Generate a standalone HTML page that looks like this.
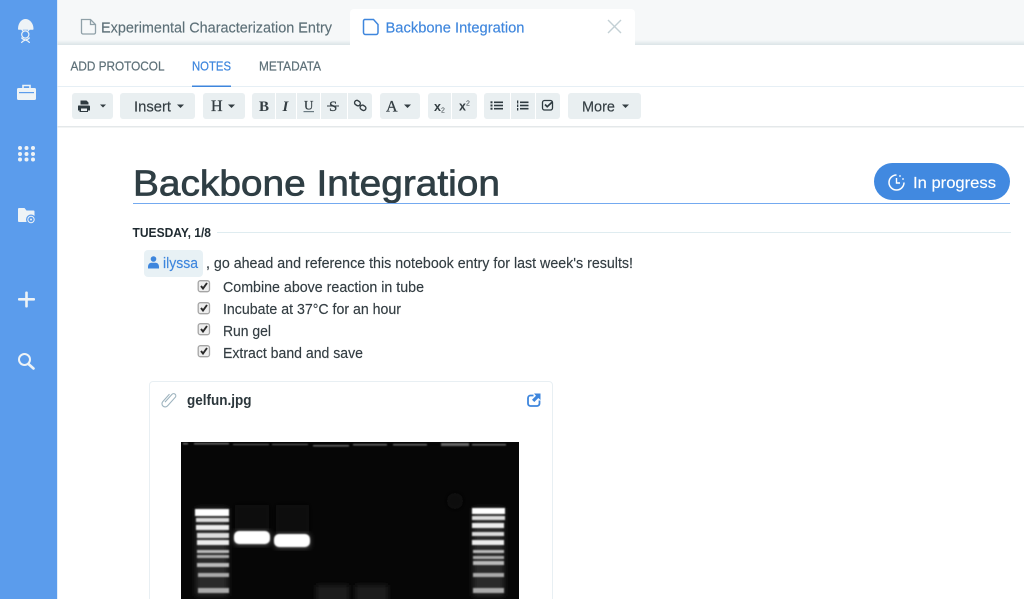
<!DOCTYPE html>
<html><head><meta charset="utf-8"><title>Backbone Integration</title>
<style>
html,body{margin:0;padding:0;background:#fff;overflow:hidden}
svg{display:block}
text{font-family:"Liberation Sans",sans-serif}
.s{font-family:"Liberation Serif",serif;font-weight:bold;fill:#333d42}
</style></head><body>
<svg xmlns="http://www.w3.org/2000/svg" width="1024" height="599" viewBox="0 0 1024 599">
<defs>
<filter id="b1" x="-30%" y="-100%" width="160%" height="300%"><feGaussianBlur stdDeviation="0.7"/></filter>
<filter id="b2" x="-30%" y="-30%" width="160%" height="160%"><feGaussianBlur stdDeviation="3"/></filter>
<linearGradient id="sh" x1="0" y1="0" x2="0" y2="1"><stop offset="0" stop-color="#f6f8f9"/><stop offset="1" stop-color="#dbe4e7"/></linearGradient>
</defs>
<rect width="1024" height="599" fill="#fff"/>
<!-- top tabs -->
<rect x="57" y="0" width="967" height="41" fill="#f6f8f9"/>
<rect x="57" y="40" width="967" height="5" fill="url(#sh)"/>
<path d="M350 45V13a4 4 0 0 1 4-4h277a4 4 0 0 1 4 4v32z" fill="#fff"/>
<path d="M81.500 19.500h9l5 5v8a1.500 1.500 0 0 1-1.500 1.500h-11a1.500 1.500 0 0 1-1.500-1.500z" fill="none" stroke="#8fa0a8" stroke-width="1.300"/>
<path d="M90.500 19.500v5h5" fill="none" stroke="#8fa0a8" stroke-width="1.300"/>
<text x="101" y="32.500" font-size="15" fill="#5d7078" stroke="#5d7078" stroke-width=".15" textLength="231" lengthAdjust="spacingAndGlyphs">Experimental Characterization Entry</text>
<path d="M364.500 19.500h9l4.500 5v8a2 2 0 0 1-2 2h-10.500a2 2 0 0 1-2-2v-11a2 2 0 0 1 1-2z" fill="none" stroke="#3e86dd" stroke-width="1.500"/>
<text x="385.500" y="32.500" font-size="15" fill="#3e86dd" stroke="#3e86dd" stroke-width=".15" textLength="139" lengthAdjust="spacingAndGlyphs">Backbone Integration</text>
<path d="M608 20l13 13M621 20l-13 13" stroke="#c3d0d5" stroke-width="1.400" fill="none"/>
<!-- nav tabs -->
<g font-size="12.500" stroke-width=".2">
<text x="70.500" y="70.500" fill="#5d7078" stroke="#5d7078" textLength="94" lengthAdjust="spacingAndGlyphs">ADD PROTOCOL</text>
<text x="192" y="70.500" fill="#3e86dd" stroke="#3e86dd" textLength="39" lengthAdjust="spacingAndGlyphs">NOTES</text>
<text x="259" y="70.500" fill="#5d7078" stroke="#5d7078" textLength="62" lengthAdjust="spacingAndGlyphs">METADATA</text>
</g>
<rect x="57" y="86" width="967" height="1" fill="#e6eff5"/>
<rect x="192" y="85.500" width="39" height="1.500" fill="#3e86dd"/>
<!-- toolbar -->
<g fill="#e9eff1">
<rect x="72" y="93" width="41" height="26" rx="3"/>
<rect x="120" y="93" width="75" height="26" rx="3"/>
<rect x="203" y="93" width="42" height="26" rx="3"/>
<rect x="252" y="93" width="120" height="26" rx="3"/>
<rect x="380" y="93" width="40" height="26" rx="3"/>
<rect x="428" y="93" width="49" height="26" rx="3"/>
<rect x="484" y="93" width="76" height="26" rx="3"/>
<rect x="568" y="93" width="73" height="26" rx="3"/>
</g>
<g fill="#fff">
<rect x="275" y="93" width="1" height="26"/><rect x="296" y="93" width="1" height="26"/><rect x="320" y="93" width="1" height="26"/><rect x="347" y="93" width="1" height="26"/>
<rect x="451" y="93" width="1" height="26"/><rect x="510" y="93" width="1" height="26"/><rect x="535" y="93" width="1" height="26"/>
</g>
<rect x="57" y="126" width="967" height="1.500" fill="#e4e8ea"/>
<!-- printer -->
<path d="M80.500 100.500h6l2 2v2h-8zM79.500 105.500h9.500a1 1 0 0 1 1 1v4h-2v1.500h-8.500v-1.500H78v-4a1 1 0 0 1 1.500-1z" fill="#2e3a40"/>
<rect x="81" y="108.500" width="6" height="2.500" fill="#e9eff1"/>
<g fill="#333d42">
<path d="M100 104.500h6l-3 3zM177 104.500h7l-3.500 3.500zM228 104.500h7l-3.500 3.500zM404 104.500h7l-3.500 3.500zM622 104.500h7l-3.500 3.500z"/>
</g>
<text x="134" y="111.500" font-size="14.500" fill="#333d42" stroke="#333d42" stroke-width=".15" textLength="37" lengthAdjust="spacingAndGlyphs">Insert</text>
<text x="211" y="111" font-size="16" class="s" style="font-weight:normal" stroke="#333d42" stroke-width=".3">H</text>
<text x="259" y="110.800" font-size="15" class="s">B</text>
<text x="282.500" y="110.800" font-size="15" class="s" font-style="italic">I</text>
<text x="304" y="109.500" font-size="13" class="s" style="font-weight:normal" stroke="#333d42" stroke-width=".2">U</text>
<rect x="303.500" y="111" width="10.500" height="1.200" fill="#6a7a82"/>
<text x="329" y="110.800" font-size="15" class="s" style="font-weight:normal" stroke="#333d42" stroke-width=".2">S</text>
<rect x="327" y="105.500" width="12" height="1" fill="#333d42"/>
<g fill="none" stroke="#333d42" stroke-width="1.400"><rect x="354.500" y="100.800" width="6" height="4.600" rx="2.300" transform="rotate(35 357.500 103)"/><rect x="360" y="105.500" width="6" height="4.600" rx="2.300" transform="rotate(35 363 107.800)"/></g>
<text x="386" y="111.500" font-size="16" class="s" style="font-weight:normal" stroke="#333d42" stroke-width=".3">A</text>
<text x="434" y="111" font-size="12.500" font-weight="bold" fill="#333d42">x</text><text x="441" y="112.500" font-size="7" fill="#333d42">2</text>
<text x="459" y="110.500" font-size="12.500" font-weight="bold" fill="#333d42">x</text><text x="466" y="105.500" font-size="7" fill="#333d42">2</text>
<!-- lists -->
<g fill="#2e3a40">
<rect x="494" y="101.500" width="9" height="1.600"/><rect x="494" y="104.700" width="9" height="1.600"/><rect x="494" y="107.900" width="9" height="1.600"/>
<rect x="490.500" y="101.300" width="2" height="2"/><rect x="490.500" y="104.500" width="2" height="2"/><rect x="490.500" y="107.700" width="2" height="2"/>
<rect x="520" y="101.500" width="8.500" height="1.600"/><rect x="520" y="104.700" width="8.500" height="1.600"/><rect x="520" y="107.900" width="8.500" height="1.600"/>
<rect x="517" y="100.500" width="1.300" height="3"/><rect x="517" y="104.500" width="1.300" height="2.500"/><rect x="517" y="108" width="1.300" height="2.500"/>
</g>
<rect x="542.500" y="100.500" width="10" height="9.500" rx="2" fill="none" stroke="#2e3a40" stroke-width="1.300"/>
<path d="M545 104.500l2.200 2.200 5.300-5" fill="none" stroke="#2e3a40" stroke-width="1.700"/>
<text x="582" y="111.500" font-size="14.500" fill="#333d42" stroke="#333d42" stroke-width=".15" textLength="33" lengthAdjust="spacingAndGlyphs">More</text>
<!-- sidebar -->
<rect x="0" y="0" width="57" height="599" fill="#5b9cec"/>
<path d="M18 29c0-6 3.500-10 7.500-10s8 4 8 10c0 .6-.5 .8-1 .8H19c-.5 0-1-.2-1-.8z" fill="#eef3f6"/>
<g fill="none" stroke="#eef3f6" stroke-width="1.200">
<path d="M21.500 29l1.500 2M29.500 29l-1.500 2"/>
<circle cx="25.300" cy="34.500" r="3.600"/>
<path d="M21.500 43c1-3.500 7-2.500 8-5.500M29.500 43c-1-3.500-7-2.500-8-5.500"/>
</g>
<path d="M18.500 88h16a1.500 1.500 0 0 1 1.500 1.500v9a1.500 1.500 0 0 1-1.500 1.500h-16a1.500 1.500 0 0 1-1.500-1.500v-9a1.500 1.500 0 0 1 1.500-1.500z" fill="#eef3f6"/>
<path d="M23 88v-2.500h7V88" fill="none" stroke="#eef3f6" stroke-width="1.600"/>
<rect x="19" y="92" width="15" height="1.200" fill="#5b9cec"/>
<g fill="#eef3f6">
<circle cx="20" cy="148" r="2"/><circle cx="26.500" cy="148" r="2"/><circle cx="33" cy="148" r="2"/>
<circle cx="20" cy="154" r="2"/><circle cx="26.500" cy="154" r="2"/><circle cx="33" cy="154" r="2"/>
<circle cx="20" cy="159.500" r="2"/><circle cx="26.500" cy="159.500" r="2"/><circle cx="33" cy="159.500" r="2"/>
<path d="M18 209a1 1 0 0 1 1-1h5.500l2 2.500h7a1 1 0 0 1 1 1V222H19a1 1 0 0 1-1-1z"/>
<circle cx="31" cy="219.500" r="5" fill="#5b9cec"/>
<rect x="18" y="298" width="17" height="2.600" rx="1"/>
<rect x="25.200" y="291.500" width="2.600" height="16" rx="1"/>
</g>
<circle cx="31" cy="219.500" r="3.200" fill="none" stroke="#eef3f6" stroke-width="1"/><circle cx="31" cy="219.500" r="1" fill="#eef3f6"/>
<circle cx="24.500" cy="359.500" r="5.500" fill="none" stroke="#eef3f6" stroke-width="2"/>
<path d="M28.500 364l5 4.500" stroke="#eef3f6" stroke-width="2.600" stroke-linecap="round"/>
<rect x="57" y="0" width="1" height="599" fill="#cfe2f8" opacity=".6"/>
<!-- title -->
<text x="133" y="195.500" font-size="36" fill="#2f3e44" stroke="#2f3e44" stroke-width=".7" textLength="367" lengthAdjust="spacingAndGlyphs">Backbone Integration</text>
<rect x="133" y="203" width="877" height="1" fill="#74aaf0"/>
<rect x="874" y="163" width="136" height="37" rx="18.500" fill="#4189e0"/>
<path d="M896.500 175a7.500 7.500 0 1 0 7.500 7.500" fill="none" stroke="#fff" stroke-width="1.500"/>
<path d="M896.500 178v5h3.500" fill="none" stroke="#fff" stroke-width="1.400"/>
<circle cx="900" cy="176" r=".9" fill="#fff"/><circle cx="903" cy="179" r=".9" fill="#fff"/>
<text x="913" y="188" font-size="16" fill="#fff" stroke="#fff" stroke-width=".15" textLength="83" lengthAdjust="spacingAndGlyphs">In progress</text>
<!-- date -->
<text x="132.500" y="237" font-size="12.500" font-weight="bold" fill="#1f2a30" textLength="78.500" lengthAdjust="spacingAndGlyphs">TUESDAY, 1/8</text>
<rect x="217" y="232" width="794" height="1" fill="#dfecf0"/>
<!-- mention -->
<rect x="144" y="250" width="59" height="27" rx="4" fill="#e8f1f5"/>
<circle cx="153.500" cy="259" r="2.800" fill="#3e86dd"/>
<path d="M148 268.500v-2a4 4 0 0 1 3-3.800h5a4 4 0 0 1 3 3.800v2z" fill="#3e86dd"/>
<text x="163" y="268" font-size="14.500" fill="#3e86dd" stroke="#3e86dd" stroke-width=".15" textLength="35" lengthAdjust="spacingAndGlyphs">ilyssa</text>
<text x="206" y="268" font-size="14.500" fill="#333d42" stroke="#333d42" stroke-width=".15" textLength="427" lengthAdjust="spacingAndGlyphs">, go ahead and reference this notebook entry for last week's results!</text>
<!-- checklist -->
<g>
<g id="c"><rect x="198.200" y="280.700" width="11.300" height="11" rx="2.200" fill="#eeeeee" stroke="#a5a5a5" stroke-width="1.300"/><path d="M201 286l2 2.500 4-5.500" fill="none" stroke="#2a2a2a" stroke-width="1.900"/></g>
<use href="#c" y="22"/><use href="#c" y="43"/><use href="#c" y="65"/>
</g>
<g font-size="14.500" fill="#333d42" stroke="#333d42" stroke-width=".15">
<text x="223" y="292" textLength="201" lengthAdjust="spacingAndGlyphs">Combine above reaction in tube</text>
<text x="223" y="314" textLength="178" lengthAdjust="spacingAndGlyphs">Incubate at 37°C for an hour</text>
<text x="223" y="336" textLength="48" lengthAdjust="spacingAndGlyphs">Run gel</text>
<text x="223" y="358" textLength="140" lengthAdjust="spacingAndGlyphs">Extract band and save</text>
</g>
<!-- attachment -->
<path d="M149.500 600V385a3.500 3.500 0 0 1 3.500-3.500h396a3.500 3.500 0 0 1 3.500 3.500v215" fill="none" stroke="#e8eff3"/>
<path transform="translate(168.500 400) rotate(42)" d="M-3.200-5V5a3.200 3.200 0 0 0 6.400 0V-6.500a2.200 2.200 0 0 0-4.400 0V4" fill="none" stroke="#9db3be" stroke-width="1.100"/>
<text x="187" y="405" font-size="14.500" font-weight="bold" fill="#2b363b" textLength="64.500" lengthAdjust="spacingAndGlyphs">gelfun.jpg</text>
<path d="M539.500 400.500v3a2.500 2.500 0 0 1-2.500 2.500h-6.500a2.500 2.500 0 0 1-2.500-2.500V398a2.500 2.500 0 0 1 2.500-2.500h3" fill="none" stroke="#3e86dd" stroke-width="1.800"/>
<path d="M534 393.500h6.500v6.500l-2.200-2-4 4-2.300-2.300 4-4z" fill="#3e86dd"/>
<!-- gel image -->
<rect x="181" y="442" width="338" height="157" fill="#060606"/>
<g fill="#8a8a8a" filter="url(#b1)" opacity=".75">
<rect x="183" y="443" width="5" height="1.500"/><rect x="194" y="443" width="35" height="1.500"/><rect x="233" y="444" width="36" height="1"/><rect x="272" y="444" width="36" height="1"/>
<rect x="313" y="445" width="36" height="1.500"/><rect x="353" y="444" width="34" height="1.500"/><rect x="393" y="444" width="34" height="1.500"/><rect x="472" y="444" width="34" height="1.500"/>
</g>
<rect x="441" y="443" width="28" height="3" fill="#666" filter="url(#b1)"/>
<rect x="235" y="505" width="34" height="25" fill="#0e0e0e" filter="url(#b2)"/>
<rect x="276" y="505" width="33" height="28" fill="#0e0e0e" filter="url(#b2)"/>
<rect x="316" y="585" width="33" height="20" fill="#1a1a1a" filter="url(#b2)"/>
<rect x="355" y="585" width="33" height="20" fill="#1a1a1a" filter="url(#b2)"/>
<circle cx="455" cy="501" r="8" fill="#0f0f0f" filter="url(#b2)"/>
<rect x="196" y="508" width="32" height="88" fill="#2a2a2a" filter="url(#b2)"/>
<rect x="473" y="508" width="31" height="88" fill="#2a2a2a" filter="url(#b2)"/>
<rect x="235" y="532" width="34" height="12" fill="#777" filter="url(#b2)"/>
<rect x="276" y="535" width="33" height="12" fill="#777" filter="url(#b2)"/>
<g fill="#fff" filter="url(#b1)">
<rect x="195" y="509" width="34" height="7"/>
<rect x="196" y="518" width="33" height="4" fill="#ddd"/>
<rect x="196" y="525" width="33" height="5" fill="#eee"/>
<rect x="197" y="533" width="32" height="5" fill="#ddd"/>
<rect x="197" y="540" width="32" height="5" fill="#eee"/>
<rect x="197" y="550" width="32" height="3" fill="#bbb"/>
<rect x="197" y="555" width="32" height="3" fill="#aaa"/>
<rect x="197" y="563" width="32" height="4" fill="#bbb"/>
<rect x="198" y="573" width="31" height="4" fill="#aaa"/>
<rect x="198" y="588" width="31" height="5" fill="#aaa"/>
<rect x="472" y="508" width="33" height="6"/>
<rect x="472" y="516" width="33" height="4" fill="#ddd"/>
<rect x="472" y="523" width="32" height="5" fill="#eee"/>
<rect x="472" y="532" width="32" height="4" fill="#ddd"/>
<rect x="472" y="540" width="32" height="5" fill="#eee"/>
<rect x="473" y="550" width="31" height="3" fill="#bbb"/>
<rect x="473" y="556" width="31" height="3" fill="#aaa"/>
<rect x="473" y="561" width="31" height="4" fill="#bbb"/>
<rect x="473" y="573" width="31" height="4" fill="#aaa"/>
<rect x="473" y="588" width="31" height="5" fill="#aaa"/>
<rect x="234" y="531" width="36" height="13" rx="5"/>
<rect x="274" y="534" width="36" height="13" rx="5"/>
</g>
</svg>
</body></html>
